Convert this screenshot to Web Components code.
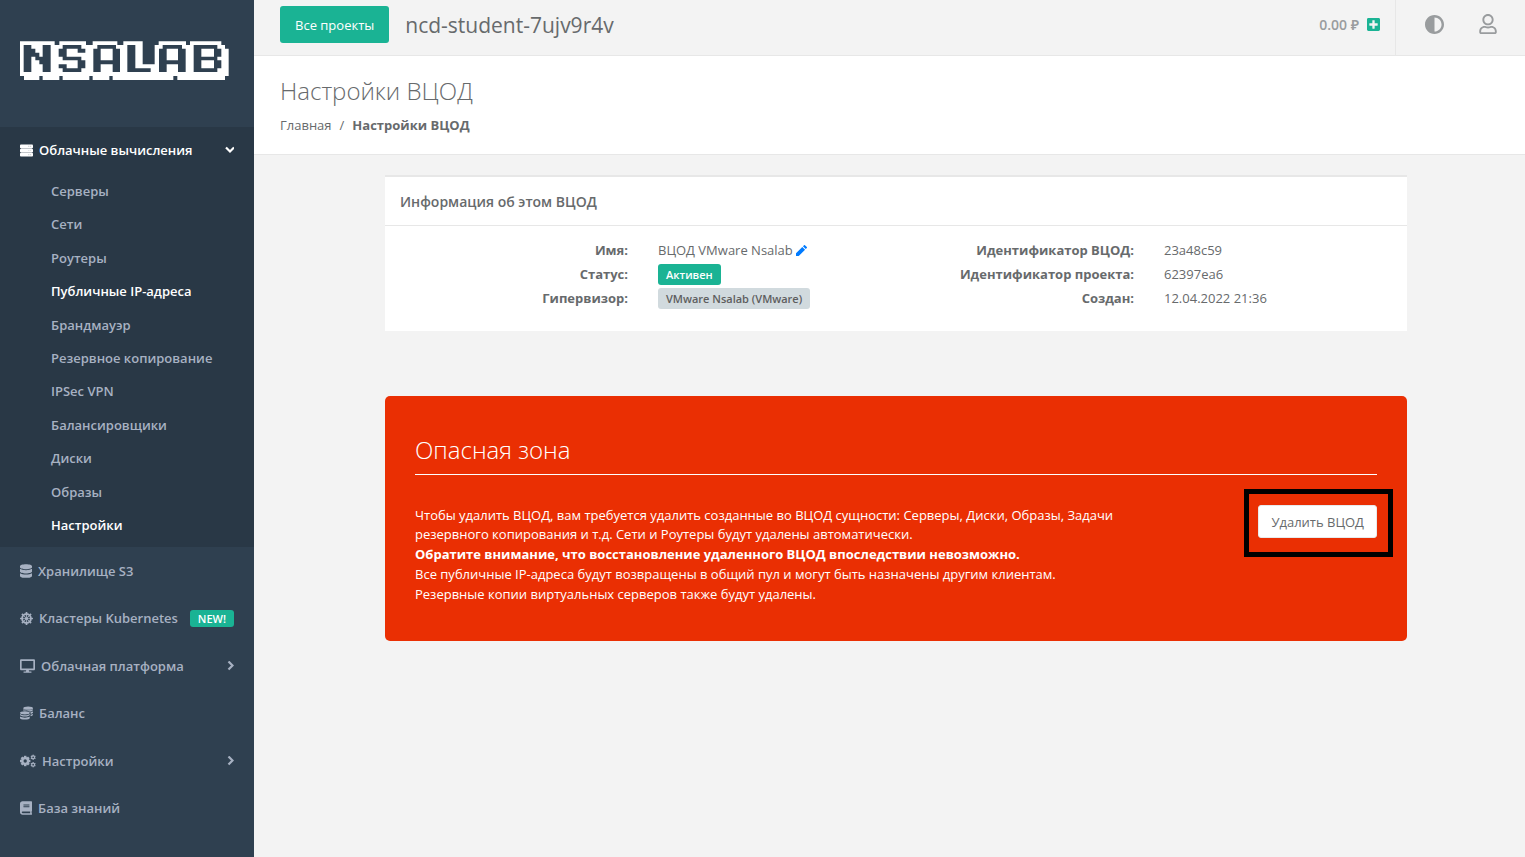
<!DOCTYPE html>
<html lang="ru">
<head>
<meta charset="utf-8">
<title>Настройки ВЦОД</title>
<style>
  html, body { margin: 0; height: 100%; }
  body { font: 400 13px/20px "Open Sans", "Noto Sans", sans-serif; color: #676a6c; background: #f3f3f3; }
</style>
</head>
<body>
<cloud-app></cloud-app>

<script>
const define = (name, html, setup) => {
  const template = document.createElement('template');
  template.innerHTML = html;
  customElements.define(name, class extends HTMLElement {
    constructor() {
      super();
      this.attachShadow({ mode: 'open' }).append(template.content.cloneNode(true));
    }
    connectedCallback() { if (setup) setup(this, this.shadowRoot); }
  });
};

const gear = (x, y, r, hole, tooth, n) => {
  let teeth = '';
  for (let i = 0; i < n; i++)
    teeth += `<rect x="${x - tooth / 2}" y="${y - r * 1.3}" width="${tooth}" height="${r * 0.6}" transform="rotate(${i * 360 / n} ${x} ${y})"/>`;
  return teeth + `<circle cx="${x}" cy="${y}" r="${(r + hole) / 2}" fill="none" stroke="currentColor" stroke-width="${r - hole}"/>`;
};

const wheel = () => {
  let spokes = '';
  for (let i = 0; i < 8; i++)
    spokes += `<path d="M240 22h32l4 24-6 170h-28l-6-170z" transform="rotate(${i * 45} 256 256)"/><rect x="222" y="2" width="68" height="56" rx="12" transform="rotate(${i * 45} 256 256)"/>`;
  return spokes + '<circle cx="256" cy="256" r="174" fill="none" stroke="currentColor" stroke-width="76"/><circle cx="256" cy="256" r="62"/>';
};

/* name: [viewBox, width, height, markup] */
const ICONS = {
  server: ['0 0 14 13', 13, 13, '<rect width="14" height="4" rx="1"/><rect y="4.5" width="14" height="4" rx="1"/><rect y="9" width="14" height="4" rx="1"/><path fill="#293846" opacity=".35" d="M9 1.500h1v1H9zM11 1.500h1v1h-1zM9 6h1v1H9zM11 6h1v1h-1zM9 10.500h1v1H9zM11 10.500h1v1h-1z"/><path opacity=".5" d="M1 3h12v7H1z"/>'],
  database: ['0 0 448 512', 12, 14, '<path d="M448 73.143v45.714C448 159.143 347.667 192 224 192S0 159.143 0 118.857V73.143C0 32.857 100.333 0 224 0s224 32.857 224 73.143zM448 176v102.857C448 319.143 347.667 352 224 352S0 319.143 0 278.857V176c48.125 33.143 136.208 48.572 224 48.572S399.874 209.143 448 176zm0 160v102.857C448 479.143 347.667 512 224 512S0 479.143 0 438.857V336c48.125 33.143 136.208 48.572 224 48.572S399.874 369.143 448 336z"/>'],
  wheel: ['0 0 512 512', 13, 13, wheel()],
  desktop: ['0 0 576 512', 15, 14, '<path d="M528 0H48C21.500 0 0 21.500 0 48v320c0 26.500 21.500 48 48 48h192l-16 48h-72c-13.300 0-24 10.700-24 24s10.700 24 24 24h272c13.300 0 24-10.700 24-24s-10.700-24-24-24h-72l-16-48h192c26.500 0 48-21.500 48-48V48c0-26.500-21.500-48-48-48zm-16 352H64V64h448v288z"/>'],
  coins: ['0 0 512 512', 13, 14, '<ellipse cx="320" cy="64" rx="192" ry="64"/><path d="M512 104v30c0 33-64 58-148 64-40-24-104-38-172-38-26 0-46 2-64 5v-61c41 29 117 40 192 40s151-11 192-40z"/><path d="M512 200v32c0 24-36 46-96 57v-48c0-8-2-14-6-20 40-3 74-10 102-21zM512 296v32c0 24-36 46-96 57v-66c38-3 70-11 96-23z"/><ellipse cx="192" cy="250" rx="192" ry="66"/><path d="M0 300v32c0 35 86 62 192 62s192-27 192-62v-32c-41 34-117 47-192 47S41 334 0 300z"/><path d="M0 394v54c0 35 86 64 192 64s192-29 192-64v-54c-41 31-117 45-192 45S41 425 0 394z"/>'],
  cogs: ['0 0 640 512', 16, 14, gear(208, 256, 160, 68, 100, 8) + gear(526, 108, 80, 34, 50, 6) + gear(526, 404, 80, 34, 50, 6)],
  book: ['0 0 448 512', 12, 14, '<path d="M448 360V24c0-13.300-10.700-24-24-24H96C43 0 0 43 0 96v320c0 53 43 96 96 96h328c13.300 0 24-10.700 24-24v-16c0-7.500-3.500-14.300-8.900-18.700-4.200-15.400-4.200-59.300 0-74.700 5.400-4.300 8.900-11.100 8.900-18.600zM128 134c0-3.300 2.700-6 6-6h212c3.300 0 6 2.700 6 6v20c0 3.300-2.700 6-6 6H134c-3.300 0-6-2.700-6-6v-20zm0 64c0-3.300 2.700-6 6-6h212c3.300 0 6 2.700 6 6v20c0 3.300-2.700 6-6 6H134c-3.300 0-6-2.700-6-6v-20zm253.400 250H96c-17.700 0-32-14.300-32-32 0-17.600 14.400-32 32-32h285.400c-1.900 17.100-1.900 46.900 0 64z"/>'],
  down: ['0 0 10 10', 10, 10, '<path d="M2 2.500 6 6.500 10 2.500" fill="none" stroke="currentColor" stroke-width="2.200"/>'],
  right: ['0 0 10 10', 10, 10, '<path d="M4.500 .500 8.500 4.500 4.500 8.500" fill="none" stroke="currentColor" stroke-width="2.200"/>'],
  plus: ['0 32 448 448', 13, 13, '<path d="M400 32H48C21.500 32 0 53.500 0 80v352c0 26.500 21.500 48 48 48h352c26.500 0 48-21.500 48-48V80c0-26.500-21.500-48-48-48zm-32 252c0 6.600-5.400 12-12 12h-92v92c0 6.600-5.400 12-12 12h-56c-6.600 0-12-5.400-12-12v-92H92c-6.600 0-12-5.400-12-12v-56c0-6.600 5.400-12 12-12h92v-92c0-6.600 5.400-12 12-12h56c6.600 0 12 5.400 12 12v92h92c6.600 0 12 5.400 12 12v56z"/>'],
  contrast: ['8 8 496 496', 19, 19, '<path d="M8 256c0 136.966 111.033 248 248 248s248-111.034 248-248S392.966 8 256 8 8 119.033 8 256zm248 184V72c101.705 0 184 82.311 184 184 0 101.705-82.311 184-184 184z"/>'],
  user: ['0 0 448 512', 18, 20, '<path d="M313.600 304c-28.700 0-42.500 16-89.600 16-47.100 0-60.800-16-89.600-16C60.200 304 0 364.200 0 438.400V464c0 26.500 21.500 48 48 48h352c26.500 0 48-21.500 48-48v-25.600c0-74.200-60.200-134.400-134.400-134.400zM400 464H48v-25.600c0-47.600 38.800-86.400 86.400-86.400 14.600 0 38.300 16 89.600 16 51.700 0 74.900-16 89.600-16 47.600 0 86.400 38.800 86.400 86.400V464zM224 288c79.500 0 144-64.500 144-144S303.500 0 224 0 80 64.500 80 144s64.500 144 144 144zm0-240c52.900 0 96 43.100 96 96s-43.100 96-96 96-96-43.100-96-96 43.100-96 96-96z"/>'],
  pencil: ['3 3 18 18', 11, 11, '<path d="M3 16.500V21h4.500L17.810 10.700l-4.500-4.500L3 16.500zM20.710 7.800c.39-.39.39-1.020 0-1.410l-3.100-3.100c-.39-.39-1.020-.39-1.410 0l-1.830 1.830 4.500 4.500 1.830-1.830z"/>']
};

define('ui-icon', `<style>:host{display:inline-flex;flex:none}svg{display:block;fill:currentColor}</style>`, (el, root) => {
  const [box, w, h, markup] = ICONS[el.getAttribute('name')];
  root.innerHTML += `<svg viewBox="${box}" width="${w}" height="${h}" aria-hidden="true">${markup}</svg>`;
});

define('ui-badge', `<style>
  :host{display:inline-block;padding:0 8px;border-radius:3px;background:#1ab394;color:#fff;font-size:11px;font-weight:600;line-height:21px;white-space:nowrap}
  :host([kind=plain]){background:#d1dade;color:#5e5e5e}
  :host([kind=small]){line-height:17px}
</style><slot></slot>`);

define('brand-logo', `<style>:host{display:block}svg{display:block}</style>
<svg viewBox="30 35 627 120" width="209" height="40" role="img" aria-label="NSALAB">
  <path fill="#fff" d="M30 36H134V47H148V36H228V47H248V36H322V47H340V36H398V105H434V47H446V36H528V47H540V36H634V47H645V58H656V140H645V152H550V152H502V140H490V152H308V140H298V152H248V140H238V152H158V140H148V152H98V140H88V152H42V140H30Z"/>
  <g fill="#2f4050">
    <path d="M41 47H64V58H76V70H88V82H98V47H122V128H98V105H88V93H76V82H64V128H41Z"/>
    <path d="M158 47H214V58H226V70H203V58H170V82H214V93H226V117H214V128H158V117H146V105H170V117H203V93H158V82H146V58H158Z"/>
    <path fill-rule="evenodd" d="M262 47H318V58H330V128H308V105H272V128H250V58H262ZM272 58H308V93H272Z"/>
    <path d="M352 47H376V117H422V128H352Z"/>
    <path fill-rule="evenodd" d="M458 47H516V58H527V128H504V105H470V128H447V58H458ZM470 58H504V93H470Z"/>
    <path fill-rule="evenodd" d="M551 47H622V58H634V82H622V93H634V117H622V128H551ZM574 58H612V82H574ZM574 93H612V117H574Z"/>
  </g>
</svg>`);

define('side-item', `<style>
  :host{display:flex;align-items:center;color:#a7b1c2;font-weight:600}
  :host([active]){color:#fff}
  a{flex:1;display:flex;align-items:center;gap:6px;padding:0 20px;color:inherit;text-decoration:none;white-space:nowrap}
  :host([sub]) a{padding-left:51px}
  .end{margin-left:auto;display:flex}
</style><a href="#"><slot name="icon"></slot><slot></slot><span class="end"><slot name="end"></slot></span></a>`);

define('side-bar', `<style>
  :host{display:flex;flex-direction:column;background:#2f4050}
  .brand{padding:41px 20px 46px}
  .group{display:grid;gap:1px;background:#293846;padding-bottom:5px}
  .group > side-item{height:46px}
  .subs{display:grid;grid-auto-rows:1fr;height:368px}
  .main{display:grid;grid-auto-rows:1fr;height:285px}
</style>
<div class="brand"><brand-logo></brand-logo></div>
<div class="group">
  <side-item active><ui-icon slot="icon" name="server"></ui-icon>Облачные вычисления<ui-icon slot="end" name="down"></ui-icon></side-item>
  <div class="subs">
    <side-item sub>Серверы</side-item>
    <side-item sub>Сети</side-item>
    <side-item sub>Роутеры</side-item>
    <side-item sub active>Публичные IP-адреса</side-item>
    <side-item sub>Брандмауэр</side-item>
    <side-item sub>Резервное копирование</side-item>
    <side-item sub>IPSec VPN</side-item>
    <side-item sub>Балансировщики</side-item>
    <side-item sub>Диски</side-item>
    <side-item sub>Образы</side-item>
    <side-item sub active>Настройки</side-item>
  </div>
</div>
<div class="main">
  <side-item><ui-icon slot="icon" name="database"></ui-icon>Хранилище S3</side-item>
  <side-item><ui-icon slot="icon" name="wheel"></ui-icon>Кластеры Kubernetes<ui-badge slot="end" kind="small">NEW!</ui-badge></side-item>
  <side-item><ui-icon slot="icon" name="desktop"></ui-icon>Облачная платформа<ui-icon slot="end" name="right"></ui-icon></side-item>
  <side-item><ui-icon slot="icon" name="coins"></ui-icon>Баланс</side-item>
  <side-item><ui-icon slot="icon" name="cogs"></ui-icon>Настройки<ui-icon slot="end" name="right"></ui-icon></side-item>
  <side-item><ui-icon slot="icon" name="book"></ui-icon>База знаний</side-item>
</div>`);

define('top-bar', `<style>
  :host{display:flex;align-items:stretch;height:55px;border-bottom:1px solid #e7e7e7;color:#999c9e}
  button{font:inherit;border:0;padding:0;background:none;color:inherit;cursor:pointer}
  .projects{margin:6px 16px 12px 26px;padding:0 15px;border-radius:3px;background:#1ab394;color:#fff}
  .name{font-size:21px;line-height:50px;color:#676a6c}
  .balance{margin-left:auto;display:flex;align-items:center;gap:8px;padding:0 15px 6px 0;border-right:1px solid #e7e7e7;font-size:14px;font-weight:600}
  button ui-icon{display:flex}
  .balance button{color:#1ab394}
  .tools{display:flex;align-items:center;gap:35px;padding:0 28px 7px 29px}
</style>
<button class="projects">Все проекты</button>
<span class="name">ncd-student-7ujv9r4v</span>
<div class="balance"><span>0.00 ₽</span><button aria-label="Пополнить"><ui-icon name="plus"></ui-icon></button></div>
<div class="tools">
  <button aria-label="Тема"><ui-icon name="contrast"></ui-icon></button>
  <button aria-label="Профиль"><ui-icon name="user"></ui-icon></button>
</div>`);

define('page-heading', `<style>
  :host{display:block;padding:19px 26px 19px;background:#fff;border-bottom:1px solid #e7e7e7}
  h1{margin:0 0 9px;font-size:24px;font-weight:300;line-height:31px}
  nav{display:flex;gap:8px}
  a{color:inherit;text-decoration:none}
</style>
<h1>Настройки ВЦОД</h1>
<nav><a href="#">Главная</a><span>/</span><strong>Настройки ВЦОД</strong></nav>`);

define('info-panel', `<style>
  :host{display:block;background:#fff;border-top:2px solid #e7e7e7}
  h2{margin:0;padding:15px 15px 13px;font-size:14px;font-weight:600;line-height:20px;border-bottom:1px solid #e7e7e7}
  .cols{display:grid;grid-template-columns:1fr 1fr;padding:12px 5px 21px}
  dl{margin:0;display:grid;grid-template-columns:1fr 1fr;grid-auto-rows:24px;column-gap:30px;padding:0 15px;align-content:start}
  dt{font-weight:700;text-align:right;line-height:24px}
  dd{margin:0;display:flex;align-items:center;gap:3px;white-space:nowrap}
  button{border:0;padding:0;background:none;color:#007bff;cursor:pointer}
  button ui-icon{display:flex}
</style>
<h2>Информация об этом ВЦОД</h2>
<div class="cols">
  <dl>
    <dt>Имя:</dt><dd>ВЦОД VMware Nsalab<button aria-label="Изменить"><ui-icon name="pencil"></ui-icon></button></dd>
    <dt>Статус:</dt><dd><ui-badge>Активен</ui-badge></dd>
    <dt>Гипервизор:</dt><dd><ui-badge kind="plain">VMware Nsalab (VMware)</ui-badge></dd>
  </dl>
  <dl>
    <dt>Идентификатор ВЦОД:</dt><dd>23a48c59</dd>
    <dt>Идентификатор проекта:</dt><dd>62397ea6</dd>
    <dt>Создан:</dt><dd>12.04.2022 21:36</dd>
  </dl>
</div>`);

define('danger-zone', `<style>
  :host{display:block;padding:38px 30px 37px;border-radius:5px;background:#ea2f03;color:#fff}
  h2{margin:0 0 30px;padding-bottom:9px;font-size:24px;font-weight:300;line-height:31px;border-bottom:1px solid #fff}
  .row{display:flex;justify-content:space-between;align-items:flex-start}
  .text{display:grid;gap:1px;width:75%;line-height:19px;padding-top:1px}
  p{margin:0}
  .action{position:relative;flex:none}
  .action::after{content:"";position:absolute;inset:-16px -16px -19px -14px;border:5px solid #000;pointer-events:none}
  button{display:block;font:inherit;height:33px;padding:0 12px;border:1px solid #e7eaec;border-radius:3px;background:#fff;color:#676a6c;cursor:pointer}
</style>
<h2>Опасная зона</h2>
<div class="row">
  <div class="text">
    <p>Чтобы удалить ВЦОД, вам требуется удалить созданные во ВЦОД сущности: Серверы, Диски, Образы, Задачи резервного копирования и т.д. Сети и Роутеры будут удалены автоматически.</p>
    <p><strong>Обратите внимание, что восстановление удаленного ВЦОД впоследствии невозможно.</strong></p>
    <p>Все публичные IP-адреса будут возвращены в общий пул и могут быть назначены другим клиентам.</p>
    <p>Резервные копии виртуальных серверов также будут удалены.</p>
  </div>
  <div class="action"><button>Удалить ВЦОД</button></div>
</div>`);

define('cloud-app', `<style>
  :host{display:grid;grid-template-columns:254px minmax(0,1fr);min-height:100%}
  main{display:grid;gap:65px;padding:20px 118px 40px 131px}
</style>
<side-bar></side-bar>
<div>
  <top-bar></top-bar>
  <page-heading></page-heading>
  <main><info-panel></info-panel><danger-zone></danger-zone></main>
</div>`);
</script>
</body>
</html>
